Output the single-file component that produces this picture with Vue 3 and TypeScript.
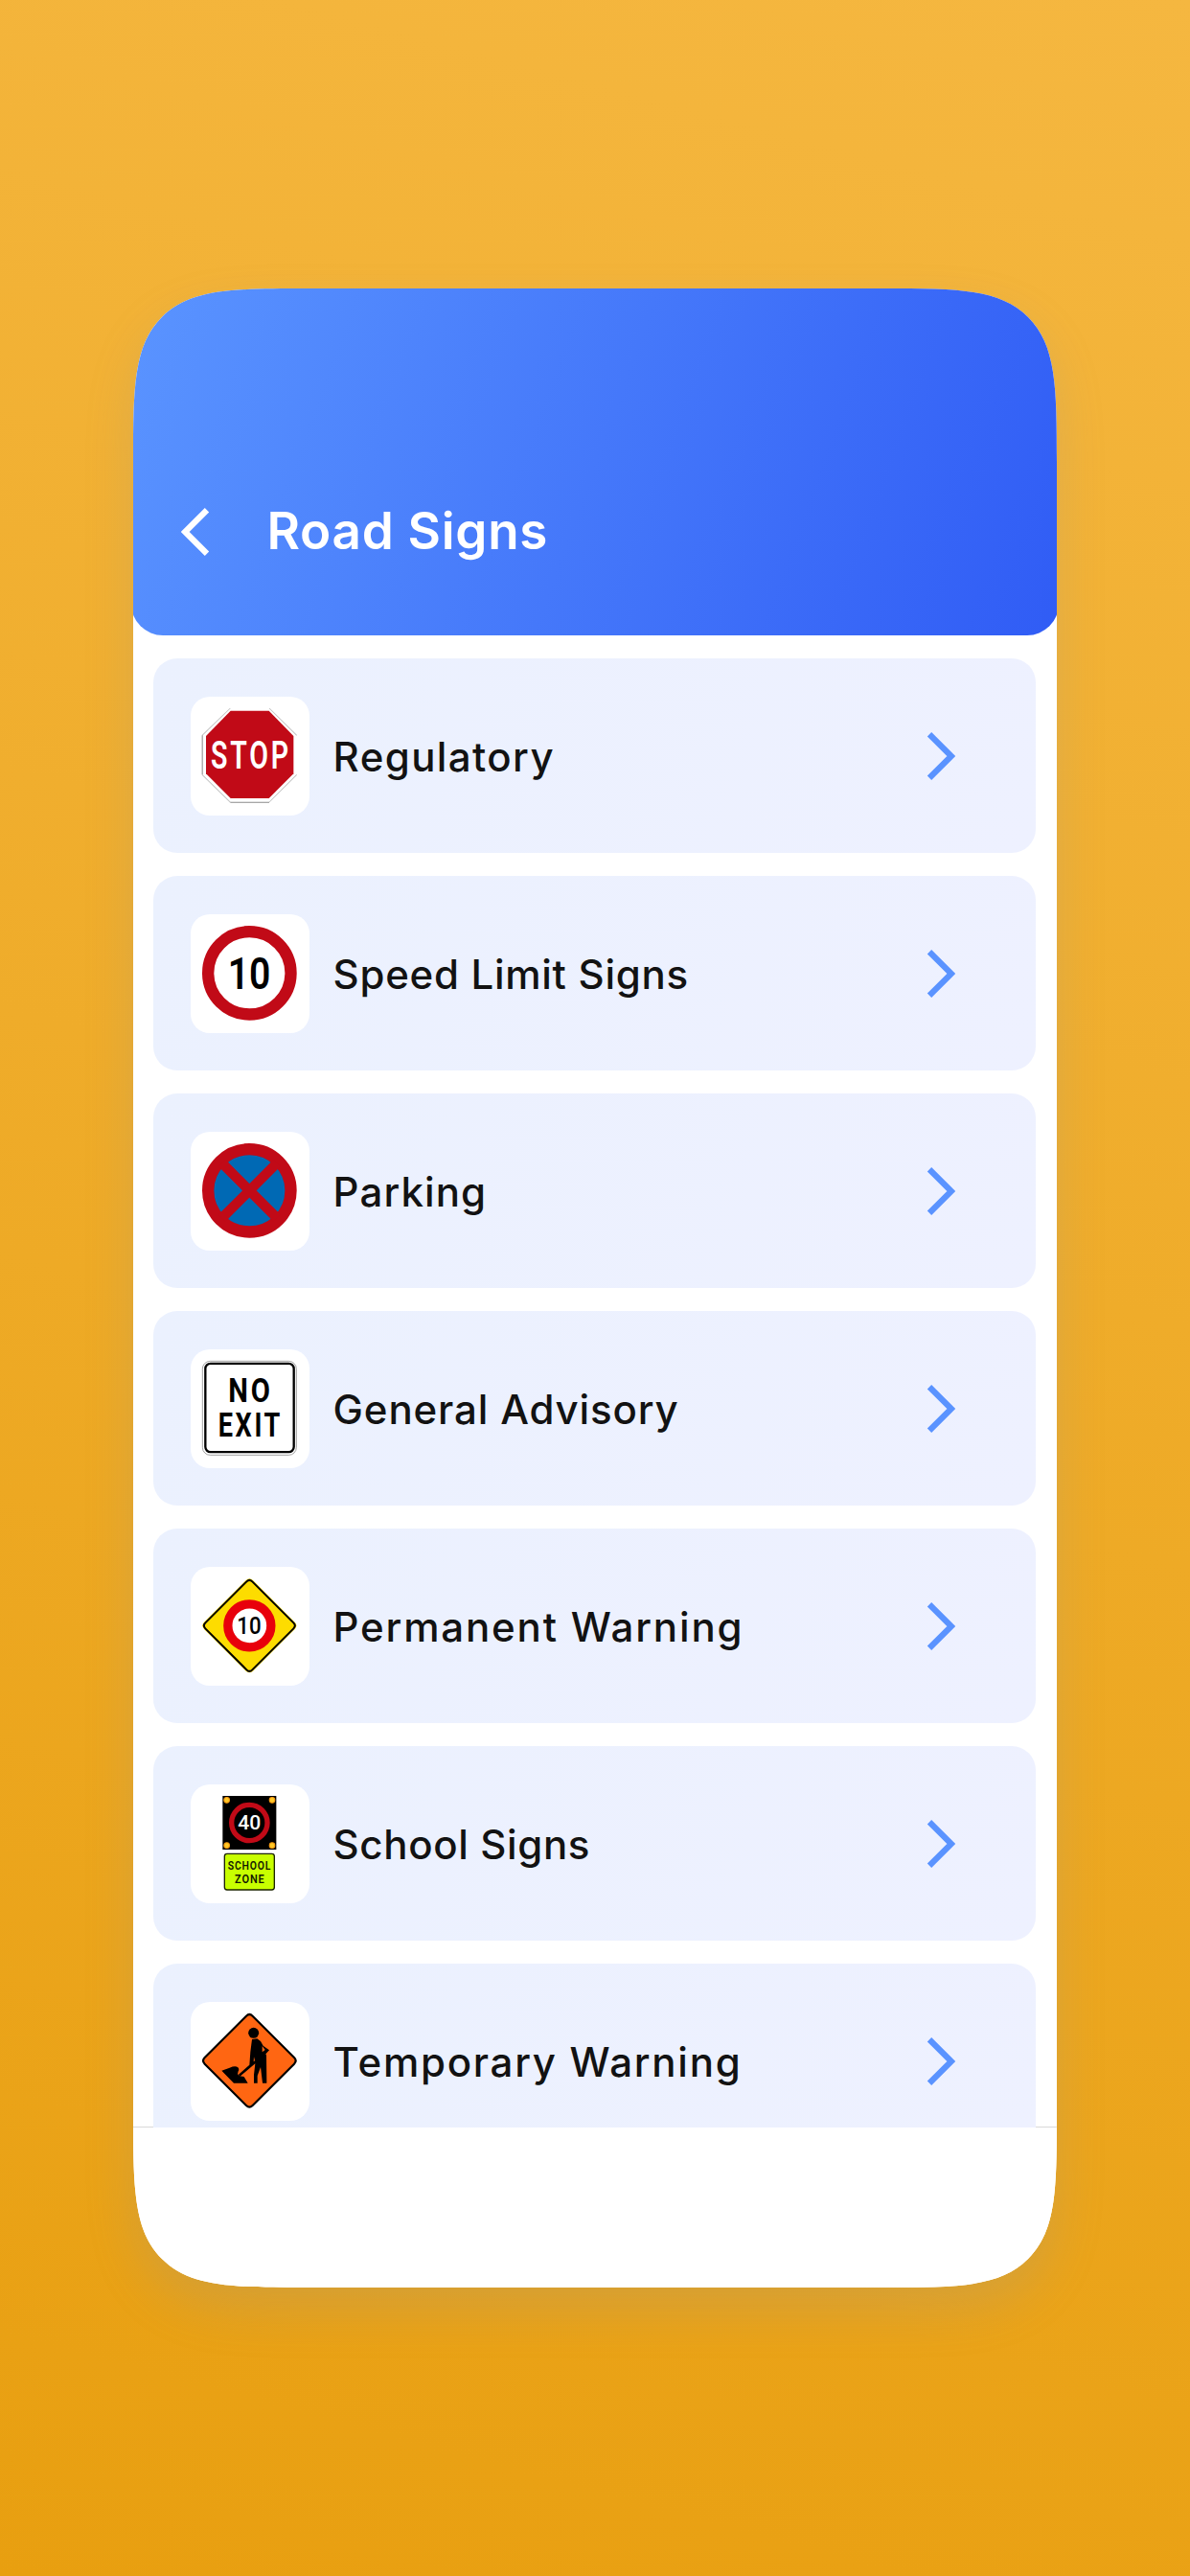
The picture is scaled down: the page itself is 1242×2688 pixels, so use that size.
<script setup lang="ts">
type SignKind = 'stop' | 'speed' | 'parking' | 'noExit' | 'warning' | 'school' | 'works'

interface Category {
  label: string
  kind: SignKind
  tracking: number
}

const categories: Category[] = [
  { label: 'Regulatory', kind: 'stop', tracking: 1.4 },
  { label: 'Speed Limit Signs', kind: 'speed', tracking: 0.72 },
  { label: 'Parking', kind: 'parking', tracking: 1.1 },
  { label: 'General Advisory', kind: 'noExit', tracking: 0.86 },
  { label: 'Permanent Warning', kind: 'warning', tracking: 1.83 },
  { label: 'School Signs', kind: 'school', tracking: 0.64 },
  { label: 'Temporary Warning', kind: 'works', tracking: 1.74 },
]
</script>

<template>
  <div class="page">
    <main class="phone">
      <header class="header">
        <svg class="back" viewBox="0 0 30 50">
          <path d="M27 2.2 4.2 25 27 47.8" />
        </svg>
        <h1 class="title">Road Signs</h1>
      </header>

      <section class="list">
        <article v-for="item in categories" :key="item.kind" class="card">
          <div class="thumb">
            <svg class="sign" viewBox="0 0 296 296">
              <g v-if="item.kind === 'stop'">
                <path d="M88 0 0 85M210 0l86 85M0 208l88 86M210 294l86-86" class="hairline" />
                <path d="M0.5 85V208M88 294.5H210" class="hairline dark" />
                <path d="M89 8H209L286 87V205L209 282H89L12 205V87Z" fill="#c10a17" />
                <text x="27" y="190" textLength="252" lengthAdjust="spacingAndGlyphs" font-size="121" font-weight="600" letter-spacing="12" fill="#fff">STOP</text>
              </g>

              <g v-else-if="item.kind === 'speed'">
                <circle cx="148" cy="148" r="129.5" fill="#fff" stroke="#c10a17" stroke-width="37" />
                <text x="80" y="198" textLength="134" lengthAdjust="spacingAndGlyphs" font-size="141" font-weight="600">10</text>
              </g>

              <g v-else-if="item.kind === 'parking'">
                <circle cx="148" cy="148" r="129.5" fill="#0069b4" stroke="#c10a17" stroke-width="37" />
                <path d="M62 62 234 234M234 62 62 234" stroke="#c10a17" stroke-width="31" />
              </g>

              <g v-else-if="item.kind === 'noExit'">
                <rect x="1" y="1" width="294" height="294" rx="24" fill="#fff" stroke="#777" stroke-width="2" />
                <rect x="10" y="8.5" width="277" height="277" rx="16" fill="none" stroke="#000" stroke-width="7" />
                <text x="82" y="129" textLength="139" lengthAdjust="spacingAndGlyphs" font-size="105" font-weight="700" letter-spacing="10">NO</text>
                <text x="50" y="238" textLength="202" lengthAdjust="spacingAndGlyphs" font-size="103" font-weight="700" letter-spacing="10">EXIT</text>
              </g>

              <g v-else-if="item.kind === 'warning'">
                <path d="M137 6Q148-4 159 6L290 137Q300 148 290 159L159 290Q148 300 137 290L6 159Q-4 148 6 137Z" fill="#fddc00" />
                <path d="M139 10Q148 1 157 10L286 139Q295 148 286 157L157 286Q148 295 139 286L10 157Q1 148 10 139Z" fill="none" stroke="#000" stroke-width="6" />
                <circle cx="148" cy="148" r="67.5" fill="#fff" stroke="#e8000b" stroke-width="28" />
                <text x="109" y="175" textLength="76" lengthAdjust="spacingAndGlyphs" font-size="77" font-weight="500">10</text>
              </g>

              <g v-else-if="item.kind === 'school'">
                <rect x="64" y="0" width="168" height="168" fill="#000" />
                <g fill="#ffc928" stroke="#f79a10" stroke-width="3">
                  <circle cx="77" cy="13" r="8.5" />
                  <circle cx="219" cy="13" r="8.5" />
                  <circle cx="77" cy="155" r="8.5" />
                  <circle cx="219" cy="155" r="8.5" />
                </g>
                <circle cx="148" cy="84" r="56" fill="none" stroke="#c10a17" stroke-width="16" />
                <text x="112" y="106" textLength="72" lengthAdjust="spacingAndGlyphs" font-size="60" font-weight="500" fill="#fff">40</text>
                <rect x="70" y="181" width="156" height="113" rx="8" fill="#c8ff00" stroke="#1c2400" stroke-width="4" />
                <text x="80" y="232" textLength="137" lengthAdjust="spacingAndGlyphs" font-size="38" font-weight="600" letter-spacing="3" fill="#141a00">SCHOOL</text>
                <text x="102" y="272" textLength="95" lengthAdjust="spacingAndGlyphs" font-size="38" font-weight="600" letter-spacing="3" fill="#141a00">ZONE</text>
              </g>

              <g v-else>
                <path d="M138 8Q148-2 158 8L288 138Q298 148 288 158L158 288Q148 298 138 288L8 158Q-2 148 8 138Z" fill="#ff6612" stroke="#000" stroke-width="6.5" />
                <circle cx="161" cy="61" r="16.5" />
                <path d="M156 81 172 79 183 87 191 101 210 115 199 127 201 131 202 218H189L183 168 173 195V218H162V192L166 157 118 197 114 191 148 161 151 120Z" />
                <path d="M188 102 197 114 188 121Z" fill="#ff6612" />
                <path d="M161 151 162 136 165 148Z" fill="#ff6612" />
                <path d="M61 179 86 170Q104 162 112 169 117 174 113 181L111 190 118 196 131 198 143 218H99Z" />
              </g>
            </svg>
          </div>
          <span class="label" :style="{ letterSpacing: item.tracking + 'px' }">{{ item.label }}</span>
          <svg class="chevron" viewBox="0 0 30 50">
            <path d="M3 2.2 25.8 25 3 47.8" />
          </svg>
        </article>
      </section>

      <footer class="footer"></footer>
    </main>
  </div>
</template>

<style>
body {
  margin: 0;
}
</style>

<style scoped>
.page {
  box-sizing: border-box;
  width: 1242px;
  height: 2688px;
  padding: 301px 139.5px 0 139px;
  overflow: hidden;
  background: linear-gradient(195deg, #f5b740 0%, #e89f10 100%);
  font-family: Inter, 'Open Sans', sans-serif;
}

.phone {
  display: flex;
  flex-direction: column;
  height: 2086px;
  overflow: hidden;
  background: #fff;
  border-radius: 188px;
  corner-shape: superellipse(2);
  box-shadow: 0 24px 50px rgba(140, 149, 159, 0.22);
}

.header {
  box-sizing: border-box;
  display: flex;
  flex: none;
  align-items: center;
  height: 361.5px;
  margin: 0 -2.5px;
  padding: 145.5px 53px 0 52.5px;
  border-radius: 0 0 33px 33px;
  background: linear-gradient(110deg, #5a94ff 0%, #305cf5 100%);
}

.back {
  width: 30px;
  height: 50px;
}

.back path,
.chevron path {
  fill: none;
  stroke: #fff;
  stroke-width: 6.2;
}

.title {
  margin: -1px 0 0 59.5px;
  color: #fff;
  font-size: 53px;
  font-weight: 600;
  letter-spacing: 0.7px;
  line-height: 60px;
}

.list {
  display: flex;
  flex: none;
  flex-direction: column;
  box-sizing: border-box;
  gap: 24.5px;
  height: 1557px;
  padding: 24.5px 22px 0 21px;
  overflow: hidden;
  background: linear-gradient(#d9d9d9, #d9d9d9) bottom / 100% 1px no-repeat;
}

.card {
  display: flex;
  flex: none;
  align-items: center;
  box-sizing: border-box;
  height: 202.5px;
  padding: 1px 84px 0 39px;
  border-radius: 25px;
  background: linear-gradient(110deg, #ebf1fe, #eef1ff);
}

.thumb {
  display: flex;
  align-items: center;
  justify-content: center;
  width: 123.6px;
  height: 123.6px;
  border-radius: 20px;
  background: #fff;
}

.sign {
  width: 98.7px;
  height: 98.7px;
  overflow: visible;
}

.sign text {
  font-family: Roboto, sans-serif;
}

.hairline {
  fill: none;
  stroke: #c4c4c4;
  stroke-width: 3;
}

.hairline.dark {
  stroke: #8a8a8a;
}

.label {
  flex: 1;
  padding: 1.5px 0 0 25px;
  color: #121212;
  font-size: 42px;
  font-weight: 500;
  line-height: 60px;
  white-space: nowrap;
}

.chevron {
  width: 30px;
  height: 50px;
}

.chevron path {
  stroke: #5a93ff;
}

.footer {
  flex: 1;
  background: #fff;
}
</style>
